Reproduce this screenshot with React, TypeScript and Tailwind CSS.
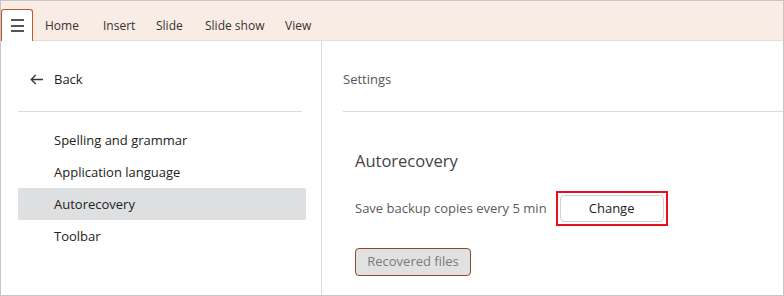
const tabs = [
	{ label: "Home", w: "w-[58px]" },
	{ label: "Insert", w: "w-[53px]" },
	{ label: "Slide", w: "w-[49px]" },
	{ label: "Slide show", w: "w-[80px]" },
	{ label: "View", w: "w-[50px]" },
];
const sections = [
	"Spelling and grammar",
	"Application language",
	"Autorecovery",
	"Toolbar",
];

function BackArrow() {
	return (
		<svg width="14" height="11" viewBox="0 0 14 11" fill="none" className="ml-[12px] text-[#333]">
			<path d="M13 5.5H1.2M5.8 1L1.2 5.5L5.8 10" stroke="currentColor" strokeWidth="1.3" />
		</svg>
	);
}

export default function App() {
	return (
		<div
			className="flex h-[296px] w-[784px] flex-col overflow-hidden border border-[#c6c6c6] bg-white text-[#222]"
			style={{ fontFamily: '"Open Sans", "Noto Sans", sans-serif' }}
		>
			{/* ribbon tabs */}
			<div className="flex h-[40px] shrink-0 items-end border-b border-[#dedede] bg-[#f9ece4]">
				<button
					type="button"
					className="-mb-px flex h-[32px] w-[32px] items-center justify-center rounded-t-[3px] border border-b-0 border-[#c4562c] bg-white"
				>
					<span className="flex w-[13px] flex-col gap-[3.5px]">
						<span className="h-[2px] bg-[#555]" />
						<span className="h-[2px] bg-[#555]" />
						<span className="h-[2px] bg-[#555]" />
					</span>
				</button>
				<div className="flex h-full items-center pt-[11px] text-[12px] text-[#333]">
					{tabs.map((t) => (
						<span key={t.label} className={`${t.w} pl-[12px]`}>
							{t.label}
						</span>
					))}
				</div>
			</div>

			<div className="flex min-h-0 flex-1">
				{/* left nav */}
				<div className="flex w-[321px] shrink-0 flex-col border-r border-[#dcdcdc] pl-[17px] pr-[15px]">
					<div className="flex h-[70px] items-center pt-[7px]">
						<BackArrow />
						<span className="ml-[10px] text-[13px]">Back</span>
					</div>
					<div className="mr-[4px] h-px bg-[#dcdcdc]" />
					<ul className="mt-[12px]">
						{sections.map((s) => (
							<li
								key={s}
								className={
									s === "Autorecovery"
										? "flex h-[32px] items-center rounded-[2px] bg-[#dedfe1] pl-[36px] pt-[2px] text-[13px]"
										: "flex h-[32px] items-center pl-[36px] pt-[2px] text-[13px]"
								}
							>
								{s}
							</li>
						))}
					</ul>
				</div>

				{/* settings pane */}
				<div className="flex min-w-0 flex-1 flex-col pl-[21px]">
					<div className="flex h-[70px] items-center pt-[7px] text-[13px] text-[#555]">
						Settings
					</div>
					<div className="h-px bg-[#dcdcdc]" />
					<div className="flex flex-col pl-[12px]">
						<h2 className="mt-[38px] text-[16.5px] leading-[22px] text-[#444]">
							Autorecovery
						</h2>
						<div className="mt-[19px] flex items-center">
							<span className="text-[13px] text-[#5c5c5c]">
								Save backup copies every 5 min
							</span>
							<div className="ml-[9px] border-2 border-[#e3101e] p-[2px]">
								<button
									type="button"
									className="flex h-[27px] w-[104px] items-center justify-center rounded-[4px] border border-[#d2d2d2] bg-white text-[13px] text-[#222]"
								>
									Change
								</button>
							</div>
						</div>
						<div className="mt-[22px]">
							<button
								type="button"
								disabled
								className="flex h-[28px] w-[116px] items-center justify-center rounded-[4px] border border-[#8e4a2c] bg-[#e1e1e2] text-[13px] text-[#7a7a7a]"
							>
								Recovered files
							</button>
						</div>
					</div>
				</div>
			</div>
		</div>
	);
}
